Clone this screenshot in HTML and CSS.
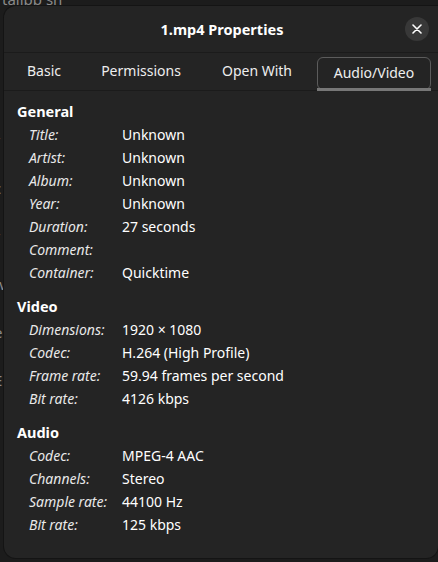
FILE: index.html
```html
<!DOCTYPE html>
<html lang="en">
<head>
  <meta charset="UTF-8" />
  <title>1.mp4 Properties</title>
  <link rel="stylesheet" href="styles.css">
</head>
<body>
<div class="backdrop">
  <div class="bg-top">tallpp sh</div>
  <div class="bg-left">
    <span>r</span><span>c</span><span>r</span><span>w</span><span>e</span><span>E</span>
  </div>
</div>
<div class="dialog">
  <header class="titlebar">
    <span class="title">1.mp4 Properties</span>
    <button class="close" aria-label="Close">
      <svg width="10" height="10" viewBox="0 0 10 10"><path d="M1 1L9 9M9 1L1 9" stroke="#fff" stroke-width="1.6" stroke-linecap="round"/></svg>
    </button>
  </header>
  <nav class="tabs">
    <span class="tab">Basic</span>
    <span class="tab">Permissions</span>
    <span class="tab">Open With</span>
    <span class="tab active">Audio/Video</span>
  </nav>
  <div class="content">
    <h3>General</h3>
    <div class="grid">
      <span class="key">Title:</span><span>Unknown</span>
      <span class="key">Artist:</span><span>Unknown</span>
      <span class="key">Album:</span><span>Unknown</span>
      <span class="key">Year:</span><span>Unknown</span>
      <span class="key">Duration:</span><span>27 seconds</span>
      <span class="key">Comment:</span><span></span>
      <span class="key">Container:</span><span>Quicktime</span>
    </div>
    <h3>Video</h3>
    <div class="grid">
      <span class="key">Dimensions:</span><span>1920 × 1080</span>
      <span class="key">Codec:</span><span>H.264 (High Profile)</span>
      <span class="key">Frame rate:</span><span>59.94 frames per second</span>
      <span class="key">Bit rate:</span><span>4126 kbps</span>
    </div>
    <h3>Audio</h3>
    <div class="grid">
      <span class="key">Codec:</span><span>MPEG-4 AAC</span>
      <span class="key">Channels:</span><span>Stereo</span>
      <span class="key">Sample rate:</span><span>44100 Hz</span>
      <span class="key">Bit rate:</span><span>125 kbps</span>
    </div>
  </div>
</div>
</body>
</html>
```

FILE: styles.css
```css
body {
  margin: 0;
  background: #1c1c1c;
  font-family: 'Noto Sans', sans-serif;
  font-size: 14px;
  color: #fff;
  width: 438px;
  height: 562px;
  overflow: hidden;
  position: relative;
}
.backdrop {
  position: absolute;
  inset: 0;
  color: #8a8a8a;
  font-size: 15px;
}
.bg-top {
  position: absolute;
  left: 2px;
  top: -11px;
}
.bg-left {
  position: absolute;
  left: -6px;
  top: 130px;
  display: flex;
  flex-direction: column;
  gap: 28px;
  line-height: 20px;
}
.dialog {
  position: relative;
  margin: 6px 0 0 4px;
  height: 552px;
  background: #242424;
  border-top-left-radius: 12px;
  border-bottom-left-radius: 12px;
  border-bottom-right-radius: 12px;
  box-shadow: 0 0 0 1px #141414;
  overflow: hidden;
}
.titlebar {
  height: 46px;
  display: flex;
  align-items: center;
  justify-content: center;
  border-bottom: 1px solid #1b1b1b;
  position: relative;
}
.title {
  font-weight: bold;
  font-size: 14.5px;
  margin-left: 2px;
}
.close {
  position: absolute;
  right: 9px;
  top: 11px;
  width: 24px;
  height: 24px;
  border-radius: 50%;
  border: none;
  background: #383838;
  display: flex;
  align-items: center;
  justify-content: center;
  padding: 0;
}
.tabs {
  height: 37px;
  display: flex;
  align-items: center;
  padding: 0 7px;
  border-bottom: 1px solid #1b1b1b;
}
.tab {
  height: 33px;
  display: flex;
  align-items: center;
  justify-content: center;
  box-sizing: border-box;
  color: #eee;
  padding-bottom: 2px;
}
.tab:nth-child(1) { width: 66px; }
.tab:nth-child(2) { width: 128px; }
.tab:nth-child(3) { width: 104px; margin-right: 8px; }
.tab.active {
  width: 114px;
  border: 1px solid #5c5c5c;
  border-radius: 6px;
  margin-top: 3px;
  position: relative;
}
.tab.active::after {
  content: '';
  position: absolute;
  left: -1px;
  right: -1px;
  bottom: -2px;
  height: 3px;
  background: #777;
}
.content {
  padding: 10px 13px;
}
h3 {
  margin: 0 0 2px;
  font-size: 14.5px;
  line-height: 20px;
}
.grid {
  display: grid;
  grid-template-columns: 93px 1fr;
  grid-auto-rows: 23px;
  padding-left: 12px;
  margin-bottom: 12px;
  line-height: 23px;
}
.key {
  font-style: italic;
  color: #e8e8e8;
}
```
